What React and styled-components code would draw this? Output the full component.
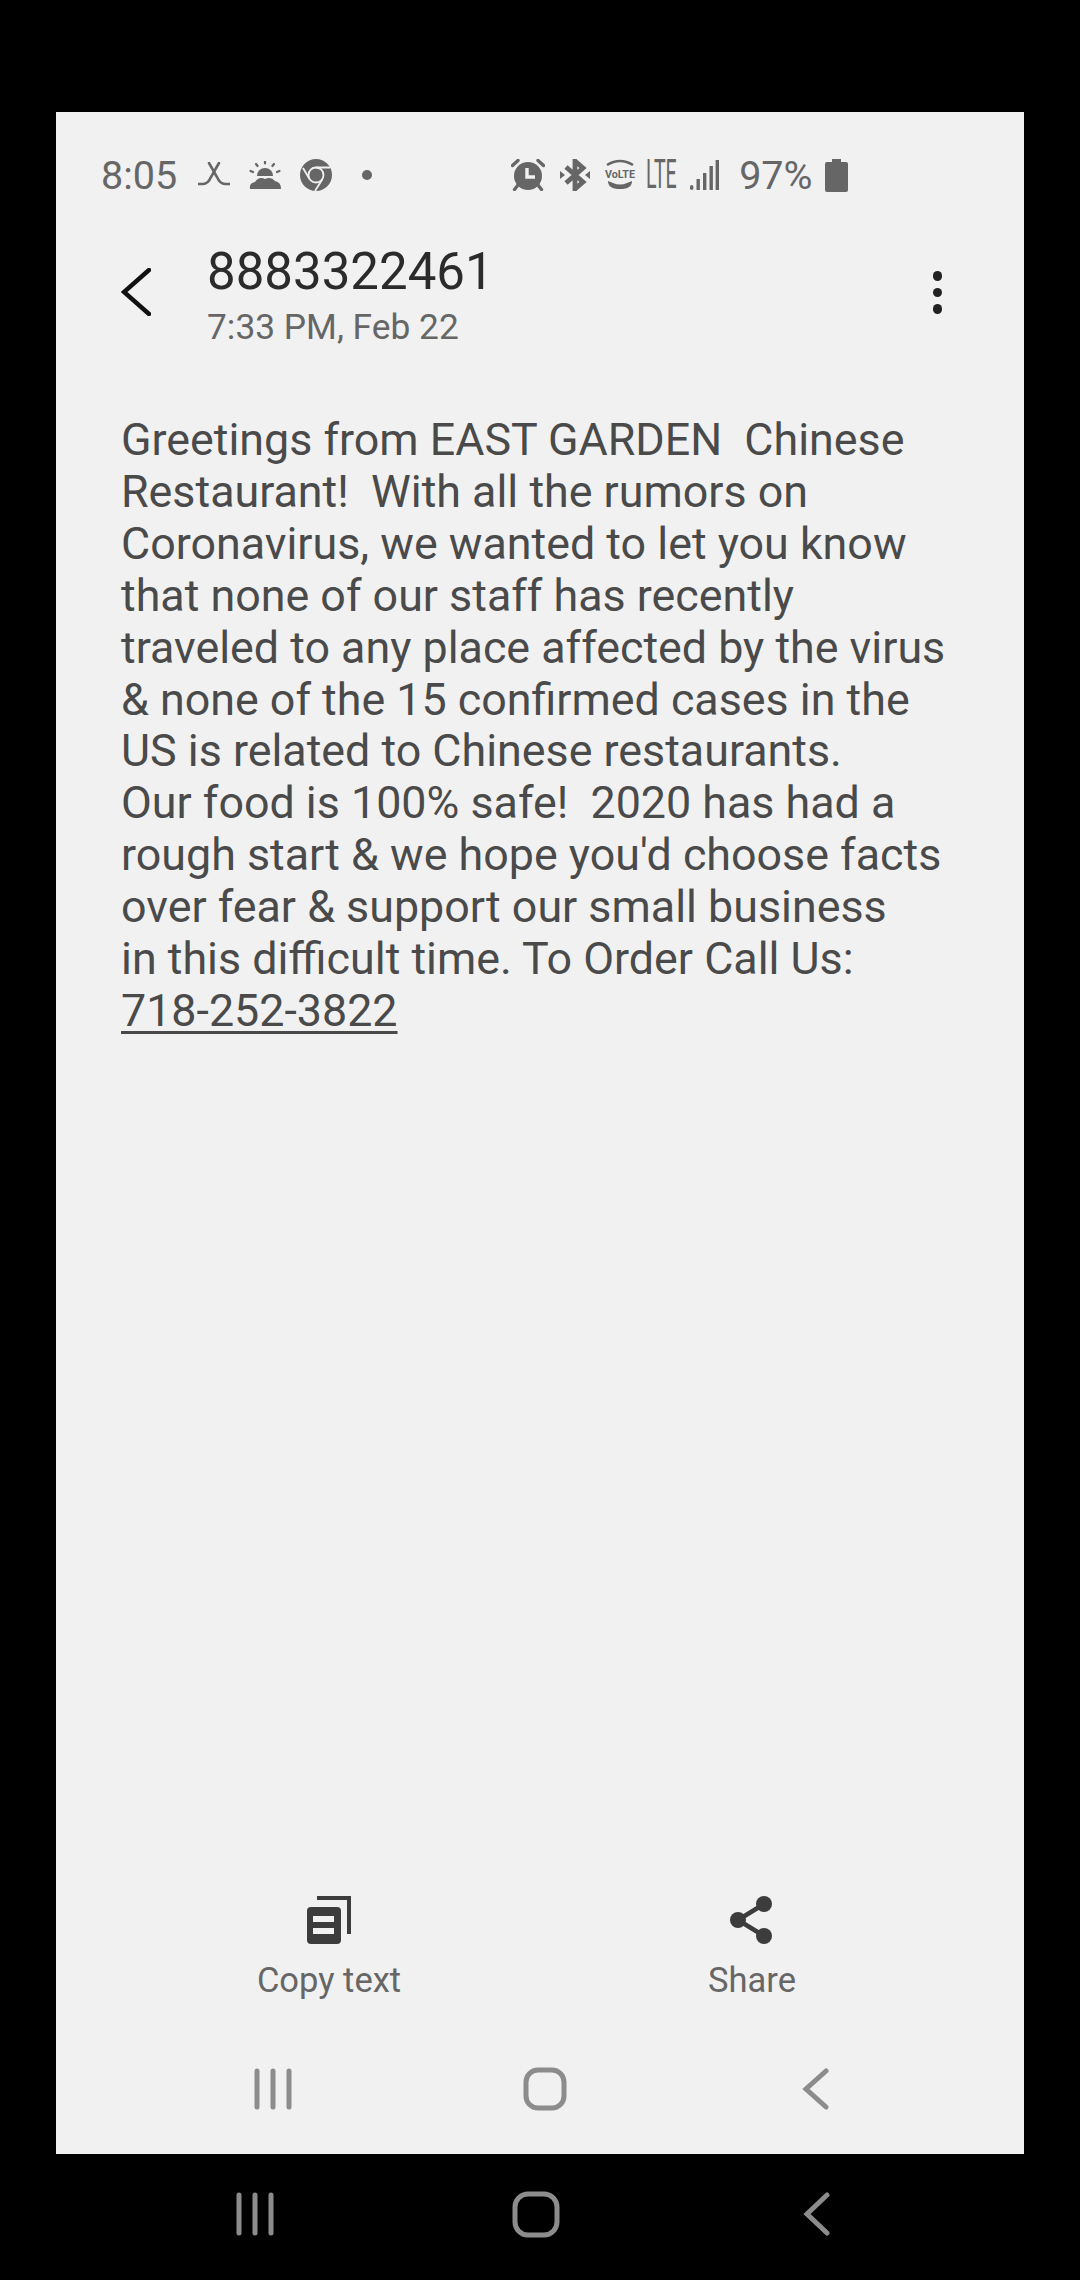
import React from 'react';
import styled, { createGlobalStyle } from 'styled-components';

const GlobalStyle = createGlobalStyle`
  html, body {
    margin: 0;
    padding: 0;
    background: #000;
    font-family: Roboto, "Liberation Sans", sans-serif;
  }
`;

const Page = styled.div`
  width: 1080px;
  height: 2280px;
  background: #000;
  display: flex;
  flex-direction: column;
  padding-top: 112px;
  box-sizing: border-box;
`;

const Panel = styled.main`
  width: 968px;
  height: 2042px;
  margin-left: 56px;
  background: #f1f1f1;
  display: flex;
  flex-direction: column;
`;

const StatusBar = styled.div`
  height: 32px;
  margin-top: 47px;
  padding-left: 45px;
  display: flex;
  align-items: center;
  color: #666;
`;

const Clock = styled.span`
  font-size: 39.5px;
  line-height: 32px;
  margin-top: 2px;
`;

const Slot = styled.span`
  display: flex;
  align-items: center;
  margin-left: ${(p) => p.$gap || 0}px;
`;

const Lte = styled.span`
  display: block;
  width: 33px;
  font-size: 40px;
  font-weight: 400;
  line-height: 32px;
  transform: scaleX(0.49);
  transform-origin: left center;
  white-space: nowrap;
`;

const Battery = styled.span`
  font-size: 39.5px;
  line-height: 32px;
  margin-left: 20px;
  margin-top: 2px;
`;

const Header = styled.header`
  display: flex;
  margin-top: 52px;
  padding: 0 82px 0 65px;
  height: 100px;
`;

const BackButton = styled.div`
  width: 86px;
  padding-top: 25px;
  flex: none;
`;

const Titles = styled.div`
  flex: 1;
  display: flex;
  flex-direction: column;
`;

const Title = styled.h1`
  margin: 0;
  font-size: 51px;
  font-weight: 400;
  line-height: 58px;
  color: #2b2b2b;
`;

const Subtitle = styled.div`
  font-size: 35.3px;
  line-height: 40px;
  color: #666;
  margin-top: 6px;
`;

const MenuDots = styled.div`
  display: flex;
  flex-direction: column;
  gap: 7px;
  padding-top: 28px;
`;

const Dot = styled.i`
  display: block;
  width: 9.5px;
  height: 9.5px;
  border-radius: 50%;
  background: #222;
`;

const Message = styled.div`
  flex: 1;
  margin-top: 71px;
  padding-left: 65px;
  font-size: 44.8px;
  line-height: 51.9px;
  color: #4a4a4a;
  white-space: pre;
`;

const PhoneLink = styled.span`
  text-decoration: underline;
  text-decoration-thickness: 3px;
  text-underline-offset: 5px;
`;

const Actions = styled.div`
  display: flex;
  gap: 223px;
  padding-left: 173px;
  height: 128px;
`;

const Action = styled.div`
  width: 200px;
  display: flex;
  flex-direction: column;
  align-items: center;
`;

const ActionLabel = styled.span`
  font-size: 34.5px;
  line-height: 40px;
  color: #666;
  margin-top: 16px;
`;

const NavBar = styled.nav`
  display: flex;
  align-items: center;
  gap: ${(p) => p.$gap}px;
  padding-left: ${(p) => p.$left}px;
  height: ${(p) => p.$height}px;
  flex: none;
`;

const NavItem = styled.div`
  width: 120px;
  height: 48px;
  display: flex;
  align-items: center;
  justify-content: center;
`;

const HockeyIcon = () => (
  <svg width="32" height="26" viewBox="0 0 32 26" fill="none" stroke="#666" strokeWidth="2.6" strokeLinecap="round">
    <path d="M11 1 L19 15 Q22 22 27 22 L32 22" />
    <path d="M21 1 L13 15 Q10 22 5 22 L0 22" />
  </svg>
);

const WeatherIcon = () => (
  <svg width="32" height="28" viewBox="0 0 32 28" fill="#666">
    <path d="M8 15 a8 8 0 0 1 16 0 Z" />
    <path d="M1 28 Q0 22 6 21 Q10 15 16 18 Q22 15 26 20 Q32 21 32 28 Z" />
    <g stroke="#666" strokeWidth="2.2" strokeLinecap="round">
      <path d="M16 0 V2.5" />
      <path d="M7 3 L8.6 5" />
      <path d="M25 3 L23.4 5" />
      <path d="M1.5 10 L4 11" />
      <path d="M30.5 10 L28 11" />
    </g>
  </svg>
);

const ChromeIcon = () => (
  <svg width="32" height="32" viewBox="0 0 32 32">
    <circle cx="16" cy="16" r="16" fill="#666" />
    <circle cx="16" cy="16" r="7.5" fill="none" stroke="#f1f1f1" strokeWidth="1.8" />
    <path d="M16 8.5 H30 M9.5 20 L3 9 M22.5 20 L15 32" stroke="#f1f1f1" strokeWidth="1.8" fill="none" />
  </svg>
);

const AlarmIcon = () => (
  <svg width="34" height="32" viewBox="0 0 34 32">
    <circle cx="17" cy="17" r="14" fill="#666" />
    <path d="M16 9 V18 H24" fill="none" stroke="#f1f1f1" strokeWidth="3.4" />
    <path d="M1.5 6.5 L7 1.5 M32.5 6.5 L27 1.5 M7 26 L3.5 30.5 M27 26 L30.5 30.5" stroke="#666" strokeWidth="3.4" strokeLinecap="round" />
  </svg>
);

const BluetoothIcon = () => (
  <svg width="30" height="32" viewBox="0 0 30 32" fill="none">
    <path d="M6 8 L23 23 L15 30 V2 L23 9 L6 24" stroke="#666" strokeWidth="4.8" />
    <path d="M0 12 L5 16 L0 20 Z M30 12 L25 16 L30 20 Z" fill="#666" />
  </svg>
);

const VolteIcon = () => (
  <svg width="32" height="32" viewBox="0 0 32 32">
    <path d="M3 6 Q16 -2 29 6" fill="none" stroke="#666" strokeWidth="2.6" />
    <path d="M4 22 Q4 30 16 30 Q28 30 28 22 L23 24 Q16 27 9 24 Z" fill="#666" />
    <text x="16" y="19" textAnchor="middle" fontFamily="Roboto, sans-serif" fontSize="11.5" fontWeight="700" fill="#666" textLength="30" lengthAdjust="spacingAndGlyphs">VoLTE</text>
  </svg>
);

const SignalIcon = () => (
  <svg width="29" height="30" viewBox="0 0 29 30" fill="#666">
    <rect x="0" y="25" width="3.4" height="5" rx="1.7" />
    <rect x="6.5" y="19" width="3.4" height="11" />
    <rect x="13" y="13" width="3.4" height="17" />
    <rect x="19.5" y="6" width="3.4" height="24" />
    <rect x="25.6" y="0" width="3.4" height="30" />
  </svg>
);

const BatteryIcon = () => (
  <svg width="23" height="33" viewBox="0 0 23 33" fill="#666">
    <path d="M7 0 H16 V3 H21 Q23 3 23 5 V31 Q23 33 21 33 H2 Q0 33 0 31 V5 Q0 3 2 3 H7 Z" />
  </svg>
);

const StatusDot = () => (
  <svg width="10" height="10" viewBox="0 0 10 10">
    <circle cx="5" cy="5" r="5" fill="#666" />
  </svg>
);

const ChevronLeft = () => (
  <svg width="30" height="48" viewBox="0 0 30 48" fill="none">
    <path d="M28 2 L3 24 L28 46" stroke="#111" strokeWidth="4.4" strokeLinecap="round" />
  </svg>
);

const CopyIcon = () => (
  <svg width="44" height="48" viewBox="0 0 44 48">
    <path d="M10 2 H42 V38" fill="none" stroke="#3c3c3c" strokeWidth="4" />
    <rect x="0" y="11" width="34" height="37" rx="4" fill="#3c3c3c" />
    <rect x="6" y="20" width="21" height="6" fill="#f1f1f1" />
    <rect x="6" y="32" width="21" height="6" fill="#f1f1f1" />
  </svg>
);

const ShareIcon = () => (
  <svg width="44" height="48" viewBox="0 0 44 48">
    <path d="M34 8 L8 24 L34 40" fill="none" stroke="#3c3c3c" strokeWidth="4.5" />
    <circle cx="34" cy="8" r="8" fill="#3c3c3c" />
    <circle cx="8" cy="24" r="8" fill="#3c3c3c" />
    <circle cx="34" cy="40" r="8" fill="#3c3c3c" />
  </svg>
);

const RecentsIcon = ({ big }) => (
  <svg width="38" height={big ? 44 : 42} viewBox={`0 0 38 ${big ? 44 : 42}`} stroke="#8c8c8c" strokeWidth="5" strokeLinecap="round">
    <path d={`M3 3 V${big ? 41 : 39} M19 3 V${big ? 41 : 39} M35 3 V${big ? 41 : 39}`} />
  </svg>
);

const HomeIcon = ({ big }) => (
  <svg width={big ? 48 : 44} height={big ? 47 : 44} viewBox={big ? '0 0 48 47' : '0 0 44 44'} fill="none">
    <rect x="3" y="3" width={big ? 42 : 38} height={big ? 41 : 38} rx={big ? 13 : 12} stroke="#8c8c8c" strokeWidth="5" />
  </svg>
);

const NavBack = ({ big }) => (
  <svg width="28" height={big ? 44 : 42} viewBox={`0 0 28 ${big ? 44 : 42}`} fill="none">
    <path d={`M24 3 L4 ${big ? 22 : 21} L24 ${big ? 41 : 39}`} stroke="#8c8c8c" strokeWidth="5" strokeLinecap="round" />
  </svg>
);

const LINES = [
  'Greetings from EAST GARDEN  Chinese',
  'Restaurant!  With all the rumors on',
  'Coronavirus, we wanted to let you know',
  'that none of our staff has recently',
  'traveled to any place affected by the virus',
  '& none of the 15 confirmed cases in the',
  'US is related to Chinese restaurants.',
  'Our food is 100% safe!  2020 has had a',
  "rough start & we hope you'd choose facts",
  'over fear & support our small business',
  'in this difficult time. To Order Call Us:',
];

export default function App() {
  return (
    <Page>
      <GlobalStyle />
      <Panel>
        <StatusBar>
          <Clock>8:05</Clock>
          <Slot $gap={21}><HockeyIcon /></Slot>
          <Slot $gap={19}><WeatherIcon /></Slot>
          <Slot $gap={19}><ChromeIcon /></Slot>
          <Slot $gap={30}><StatusDot /></Slot>
          <Slot $gap={139}><AlarmIcon /></Slot>
          <Slot $gap={15}><BluetoothIcon /></Slot>
          <Slot $gap={14}><VolteIcon /></Slot>
          <Slot $gap={10}><Lte>LTE</Lte></Slot>
          <Slot $gap={11}><SignalIcon /></Slot>
          <Battery>97%</Battery>
          <Slot $gap={12}><BatteryIcon /></Slot>
        </StatusBar>

        <Header>
          <BackButton><ChevronLeft /></BackButton>
          <Titles>
            <Title>8883322461</Title>
            <Subtitle>7:33 PM, Feb 22</Subtitle>
          </Titles>
          <MenuDots><Dot /><Dot /><Dot /></MenuDots>
        </Header>

        <Message>
          {LINES.map((line) => <div key={line}>{line}</div>)}
          <PhoneLink>718-252-3822</PhoneLink>
        </Message>

        <Actions>
          <Action>
            <CopyIcon />
            <ActionLabel>Copy text</ActionLabel>
          </Action>
          <Action>
            <ShareIcon />
            <ActionLabel>Share</ActionLabel>
          </Action>
        </Actions>

        <NavBar $gap={151.5} $left={157} $height={130}>
          <NavItem><RecentsIcon /></NavItem>
          <NavItem><HomeIcon /></NavItem>
          <NavItem><NavBack /></NavItem>
        </NavBar>
      </Panel>

      <NavBar $gap={161} $left={195} $height={120}>
        <NavItem><RecentsIcon big /></NavItem>
        <NavItem><HomeIcon big /></NavItem>
        <NavItem><NavBack big /></NavItem>
      </NavBar>
    </Page>
  );
}
